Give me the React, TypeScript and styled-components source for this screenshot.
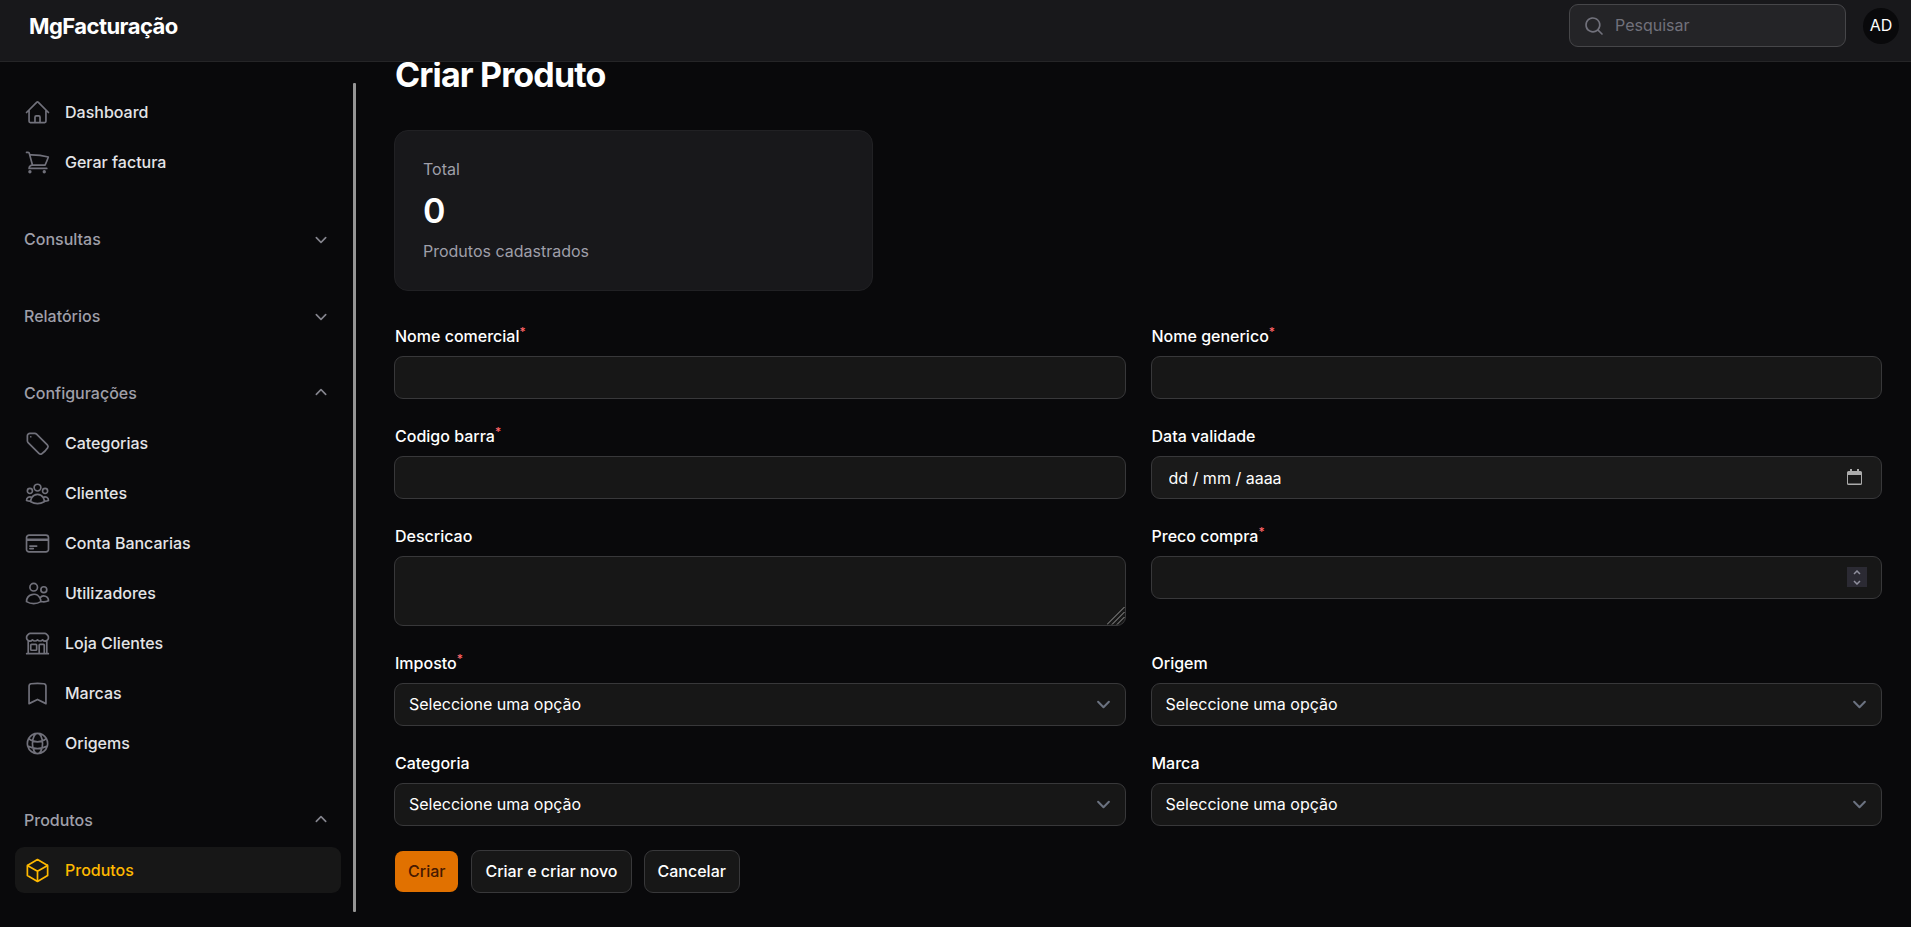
import React from 'react';
import styled, { createGlobalStyle } from 'styled-components';
import type { IconType } from 'react-icons';
import {
  HiOutlineHome,
  HiOutlineShoppingCart,
  HiOutlineTag,
  HiOutlineUserGroup,
  HiOutlineCreditCard,
  HiOutlineUsers,
  HiOutlineBuildingStorefront,
  HiOutlineBookmark,
  HiOutlineGlobeAlt,
  HiOutlineCube,
  HiMiniMagnifyingGlass,
  HiMiniChevronDown,
  HiMiniChevronUp,
} from 'react-icons/hi2';

const GlobalStyle = createGlobalStyle`
  *, *::before, *::after { box-sizing: border-box; }
  body {
    margin: 0;
    background: #09090b;
    color: #ffffff;
    font-family: Inter, 'Liberation Sans', sans-serif;
    font-size: 16px;
    line-height: 23px;
  }
  button, input, select, textarea { font: inherit; color: inherit; margin: 0; }
  h1, p { margin: 0; }
`;

const Page = styled.div`
  display: flex;
  flex-direction: column;
  min-height: 100vh;
`;

const Topbar = styled.header`
  position: relative;
  z-index: 1;
  display: flex;
  align-items: center;
  justify-content: space-between;
  height: 62px;
  padding: 0 12px 10px 29px;
  background: #18181b;
  border-bottom: 1px solid #252527;
`;

const Brand = styled.a`
  color: #ffffff;
  font-size: 22px;
  font-weight: 700;
  letter-spacing: -0.025em;
  line-height: 28px;
  text-decoration: none;
`;

const TopbarEnd = styled.div`
  display: flex;
  align-items: center;
  gap: 17px;
`;

const SearchBox = styled.label`
  display: flex;
  align-items: center;
  gap: 10px;
  width: 277px;
  height: 43px;
  padding: 0 13px;
  border: 1px solid #464649;
  border-radius: 9px;
  background: #242427;
  color: #71717b;
`;

const SearchInput = styled.input`
  flex: 1;
  min-width: 0;
  padding: 0;
  border: 0;
  outline: 0;
  background: transparent;
  color: #ffffff;
  &::placeholder { color: #71717b; opacity: 1; }
`;

const Avatar = styled.button`
  width: 36px;
  height: 36px;
  padding: 0;
  border: 0;
  border-radius: 50%;
  background: #09090b;
  color: #ffffff;
  font-size: 16px;
`;

const Body = styled.div`
  display: flex;
  flex: 1;
`;

const Sidebar = styled.aside`
  display: flex;
  gap: 12px;
  flex: 0 0 356px;
  padding: 21px 0 15px 15px;
`;

const Nav = styled.nav`
  display: flex;
  flex: 1;
  flex-direction: column;
  gap: 31px;
  padding-top: 6px;
`;

const ScrollThumb = styled.div`
  width: 3px;
  border-radius: 1px;
  background: #959595;
`;

const Group = styled.div`
  display: flex;
  flex-direction: column;
  gap: 4px;
`;

const GroupButton = styled.button`
  display: flex;
  align-items: center;
  justify-content: space-between;
  height: 46px;
  padding: 0 9px;
  border: 0;
  background: transparent;
  color: #9f9fa9;
  font-weight: 500;
  svg { color: #85858e; }
`;

const NavLink = styled.a<{ $active?: boolean }>`
  display: flex;
  align-items: center;
  gap: 14px;
  height: 46px;
  padding: 0 9px;
  border-radius: 9px;
  background: ${(p) => (p.$active ? '#171717' : 'transparent')};
  color: ${(p) => (p.$active ? '#ffb900' : '#e4e4e7')};
  font-weight: 500;
  text-decoration: none;
  svg { color: ${(p) => (p.$active ? '#ffb900' : '#71717b')}; }
`;

const Main = styled.main`
  flex: 1;
  min-width: 0;
  padding: 0 29px 34px 38px;
`;

const Title = styled.h1`
  padding-left: 1px;
  font-size: 34px;
  font-weight: 700;
  letter-spacing: -0.025em;
  line-height: 26px;
`;

const Stats = styled.section`
  display: grid;
  grid-template-columns: repeat(3, 1fr);
  gap: 25px;
  margin-top: 42px;
`;

const StatCard = styled.div`
  display: flex;
  flex-direction: column;
  gap: 9px;
  padding: 27px 28px;
  border: 1px solid #212124;
  border-radius: 14px;
  background: #18181b;
`;

const StatLabel = styled.p`
  color: #9f9fa9;
`;

const StatValue = styled.p`
  font-size: 34px;
  font-weight: 600;
  letter-spacing: -0.025em;
  line-height: 41px;
`;

const Form = styled.form`
  margin-top: 34px;
`;

const Fields = styled.div`
  display: grid;
  grid-template-columns: repeat(2, minmax(0, 1fr));
  align-items: start;
  gap: 26px 25px;
`;

const FieldBox = styled.div`
  display: flex;
  flex-direction: column;
  gap: 8px;
`;

const Label = styled.label`
  padding-left: 1px;
  font-weight: 500;
`;

const Required = styled.sup`
  color: #ff6467;
  font-size: 12px;
  line-height: 0;
`;

const ControlWrap = styled.div`
  position: relative;
  display: flex;
`;

const Control = styled.input<{ $date?: boolean }>`
  width: 100%;
  height: 43px;
  padding: 0 ${(p) => (p.$date ? 17 : 14)}px;
  border: 1px solid #38383a;
  border-radius: 9px;
  outline: 0;
  background: ${(p) => (p.$date ? '#1a1a1a' : '#171717')};
  appearance: textfield;
  &::placeholder { color: #ffffff; opacity: 1; }
  &::-webkit-inner-spin-button, &::-webkit-outer-spin-button { appearance: none; margin: 0; }
`;

const TextArea = styled.textarea`
  width: 100%;
  height: 70px;
  padding: 8px 14px;
  border: 1px solid #38383a;
  border-radius: 9px;
  outline: 0;
  background: #171717;
  resize: none;
`;

const Select = styled.select`
  width: 100%;
  height: 43px;
  padding: 0 40px 0 14px;
  border: 1px solid #38383a;
  border-radius: 9px;
  outline: 0;
  background: #171717;
  appearance: none;
`;

const SelectArrow = styled.svg`
  position: absolute;
  top: 8px;
  right: 9px;
  pointer-events: none;
`;

const ResizeGrip = styled.svg`
  position: absolute;
  right: 1px;
  bottom: 1px;
  pointer-events: none;
`;

const CalendarButton = styled.button`
  position: absolute;
  top: 13px;
  right: 20px;
  display: flex;
  padding: 0;
  border: 0;
  background: transparent;
`;

const Spinner = styled.div`
  position: absolute;
  top: 11px;
  right: 15px;
  display: flex;
  flex-direction: column;
  width: 20px;
  height: 20px;
  background: #2b2a33;
`;

const SpinButton = styled.button`
  display: flex;
  align-items: center;
  justify-content: center;
  height: 10px;
  padding: 0;
  border: 0;
  background: transparent;
`;

const Actions = styled.div`
  display: flex;
  gap: 12px;
  margin-top: 24px;
`;

const ActionButton = styled.button<{ $primary?: boolean }>`
  height: 43px;
  padding: 0 13px;
  border: 1px solid ${(p) => (p.$primary ? 'transparent' : '#38383a')};
  border-radius: 9px;
  background: ${(p) => (p.$primary ? '#e17100' : '#171717')};
  background-clip: ${(p) => (p.$primary ? 'padding-box' : 'border-box')};
  color: ${(p) => (p.$primary ? '#461901' : '#ffffff')};
  font-weight: 500;
`;

type NavItem = { label: string; icon: IconType; active?: boolean };
type NavGroup = { title?: string; open?: boolean; items: NavItem[] };

const groups: NavGroup[] = [
  {
    items: [
      { label: 'Dashboard', icon: HiOutlineHome },
      { label: 'Gerar factura', icon: HiOutlineShoppingCart },
    ],
  },
  { title: 'Consultas', items: [] },
  { title: 'Relatórios', items: [] },
  {
    title: 'Configurações',
    open: true,
    items: [
      { label: 'Categorias', icon: HiOutlineTag },
      { label: 'Clientes', icon: HiOutlineUserGroup },
      { label: 'Conta Bancarias', icon: HiOutlineCreditCard },
      { label: 'Utilizadores', icon: HiOutlineUsers },
      { label: 'Loja Clientes', icon: HiOutlineBuildingStorefront },
      { label: 'Marcas', icon: HiOutlineBookmark },
      { label: 'Origems', icon: HiOutlineGlobeAlt },
    ],
  },
  { title: 'Produtos', open: true, items: [{ label: 'Produtos', icon: HiOutlineCube, active: true }] },
];

type FieldProps = { id: string; label: string; required?: boolean; children: React.ReactNode };

function Field({ id, label, required, children }: FieldProps) {
  return (
    <FieldBox>
      <Label htmlFor={id}>
        {label}
        {required && <Required>*</Required>}
      </Label>
      <ControlWrap>{children}</ControlWrap>
    </FieldBox>
  );
}

function SelectField({ id, label, required }: Omit<FieldProps, 'children'>) {
  return (
    <Field id={id} label={label} required={required}>
      <Select id={id} defaultValue="">
        <option value="">Seleccione uma opção</option>
      </Select>
      <SelectArrow width="27" height="27" viewBox="0 0 20 20" fill="none" aria-hidden="true">
        <path d="M6 8l4 4 4-4" stroke="#6b7280" strokeWidth="1.5" strokeLinecap="round" strokeLinejoin="round" />
      </SelectArrow>
    </Field>
  );
}

export default function App() {
  return (
    <Page>
      <GlobalStyle />
      <Topbar>
        <Brand href="#">MgFacturação</Brand>
        <TopbarEnd>
          <SearchBox>
            <HiMiniMagnifyingGlass size={22} aria-hidden="true" />
            <SearchInput type="search" placeholder="Pesquisar" aria-label="Pesquisar" />
          </SearchBox>
          <Avatar type="button">AD</Avatar>
        </TopbarEnd>
      </Topbar>
      <Body>
        <Sidebar>
          <Nav>
            {groups.map((group, i) => (
              <Group key={i}>
                {group.title && (
                  <GroupButton type="button" aria-expanded={!!group.open}>
                    {group.title}
                    {group.open ? <HiMiniChevronUp size={22} /> : <HiMiniChevronDown size={22} />}
                  </GroupButton>
                )}
                {group.items.map(({ label, icon: Icon, active }) => (
                  <NavLink key={label} href="#" $active={active}>
                    <Icon size={27} aria-hidden="true" />
                    {label}
                  </NavLink>
                ))}
              </Group>
            ))}
          </Nav>
          <ScrollThumb />
        </Sidebar>
        <Main>
          <Title>Criar Produto</Title>
          <Stats>
            <StatCard>
              <StatLabel>Total</StatLabel>
              <StatValue>0</StatValue>
              <StatLabel>Produtos cadastrados</StatLabel>
            </StatCard>
          </Stats>
          <Form onSubmit={(e) => e.preventDefault()}>
            <Fields>
              <Field id="nome-comercial" label="Nome comercial" required>
                <Control id="nome-comercial" type="text" />
              </Field>
              <Field id="nome-generico" label="Nome generico" required>
                <Control id="nome-generico" type="text" />
              </Field>
              <Field id="codigo-barra" label="Codigo barra" required>
                <Control id="codigo-barra" type="text" />
              </Field>
              <Field id="data-validade" label="Data validade">
                <Control id="data-validade" type="text" placeholder="dd / mm / aaaa" $date />
                <CalendarButton type="button" aria-label="Abrir calendário">
                  <svg width="15" height="16" viewBox="0 0 15 16" aria-hidden="true">
                    <path
                      fill="#ababab"
                      fillRule="evenodd"
                      d="M3 0h2v2h5V0h2v2h1.5A1.5 1.5 0 0 1 15 3.5v11a1.5 1.5 0 0 1-1.5 1.5h-12A1.5 1.5 0 0 1 0 14.5v-11A1.5 1.5 0 0 1 1.5 2H3zM1 6v8.5h13V6z"
                    />
                  </svg>
                </CalendarButton>
              </Field>
              <Field id="descricao" label="Descricao">
                <TextArea id="descricao" />
                <ResizeGrip width="18" height="18" viewBox="0 0 18 18" aria-hidden="true">
                  <path d="M0 17.5L17.5 0M5 17.5L17.5 5M10 17.5L17.5 10" stroke="#9a9a9a" strokeWidth="1" />
                </ResizeGrip>
              </Field>
              <Field id="preco-compra" label="Preco compra" required>
                <Control id="preco-compra" type="number" />
                <Spinner>
                  <SpinButton type="button" aria-label="Aumentar">
                    <svg width="8" height="5" viewBox="0 0 8 5" aria-hidden="true">
                      <path d="M1 4l3-3 3 3" fill="none" stroke="#8f8f9d" strokeWidth="1.5" />
                    </svg>
                  </SpinButton>
                  <SpinButton type="button" aria-label="Diminuir">
                    <svg width="8" height="5" viewBox="0 0 8 5" aria-hidden="true">
                      <path d="M1 1l3 3 3-3" fill="none" stroke="#8f8f9d" strokeWidth="1.5" />
                    </svg>
                  </SpinButton>
                </Spinner>
              </Field>
              <SelectField id="imposto" label="Imposto" required />
              <SelectField id="origem" label="Origem" />
              <SelectField id="categoria" label="Categoria" />
              <SelectField id="marca" label="Marca" />
            </Fields>
            <Actions>
              <ActionButton type="submit" $primary>Criar</ActionButton>
              <ActionButton type="button">Criar e criar novo</ActionButton>
              <ActionButton type="button">Cancelar</ActionButton>
            </Actions>
          </Form>
        </Main>
      </Body>
    </Page>
  );
}
